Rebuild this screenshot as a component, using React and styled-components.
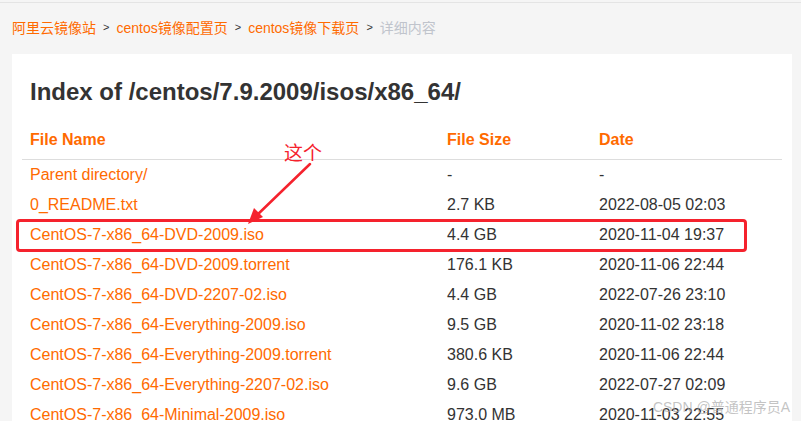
import React from "react";
import styled, { createGlobalStyle } from "styled-components";

const Global = createGlobalStyle`
  html, body { margin: 0; padding: 0; }
  body {
    background: #f5f5f5;
    font-family: "Liberation Sans", Arial, "Noto Sans CJK SC", sans-serif;
    overflow: hidden;
  }
`;

const Page = styled.div`
  position: relative;
  width: 801px;
  height: 421px;
  overflow: hidden;
  border-top: 1px solid #e4e4e4;
  margin-top: 2px;
  box-sizing: border-box;
  background: #f5f5f5;
`;

const Crumbs = styled.nav`
  display: flex;
  align-items: center;
  height: 48px;
  padding: 0 12px;
  font-size: 14px;
  font-family: "Liberation Sans", Arial, "Noto Sans CJK SC", sans-serif;
`;

const Crumb = styled.span`
  color: ${(p) => (p.$current ? "#c0c4cc" : "#ff6a00")};
`;

const Sep = styled.span`
  color: #333;
  font-size: 11px;
  margin: 0 7px 0 7px;
`;

const Card = styled.main`
  position: relative;
  margin: 3px 9px 0 12px;
  background: #fff;
  padding: 24px 10px 0;
  height: 400px;
`;

const Title = styled.h1`
  margin: 0 0 14px 8px;
  font-size: 24px;
  line-height: 28px;
  font-weight: bold;
  color: #333;
`;

const Row = styled.div`
  display: grid;
  grid-template-columns: 417px 152px 1fr;
  height: ${(p) => (p.$head ? "40px" : "30px")};
  align-items: center;
  border-bottom: ${(p) => (p.$head ? "1px solid #ddd" : "none")};
  box-sizing: border-box;
  font-size: 16px;
`;

const Cell = styled.span`
  padding-left: 8px;
  color: ${(p) => (p.$head || p.$link ? "#ff6a00" : "#333")};
  font-weight: ${(p) => (p.$head ? "bold" : "normal")};
  white-space: nowrap;
`;

const Highlight = styled.div`
  position: absolute;
  left: 4px;
  top: 165px;
  width: 731px;
  height: 33px;
  border: 3px solid #f5222d;
  border-radius: 4px;
  box-sizing: border-box;
  pointer-events: none;
`;

const Note = styled.div`
  position: absolute;
  left: 272px;
  top: 86px;
  font-size: 19px;
  color: #f5222d;
  font-family: "Noto Sans CJK SC", sans-serif;
  line-height: 24px;
`;

const Arrow = styled.svg`
  position: absolute;
  left: 225px;
  top: 105px;
`;

const Watermark = styled.div`
  position: absolute;
  right: 11px;
  bottom: 7px;
  font-size: 14px;
  color: rgba(170, 170, 170, 0.7);
  font-family: "Liberation Sans", "Noto Sans CJK SC", sans-serif;
`;

const rows = [
  ["Parent directory/", "-", "-"],
  ["0_README.txt", "2.7 KB", "2022-08-05 02:03"],
  ["CentOS-7-x86_64-DVD-2009.iso", "4.4 GB", "2020-11-04 19:37"],
  ["CentOS-7-x86_64-DVD-2009.torrent", "176.1 KB", "2020-11-06 22:44"],
  ["CentOS-7-x86_64-DVD-2207-02.iso", "4.4 GB", "2022-07-26 23:10"],
  ["CentOS-7-x86_64-Everything-2009.iso", "9.5 GB", "2020-11-02 23:18"],
  ["CentOS-7-x86_64-Everything-2009.torrent", "380.6 KB", "2020-11-06 22:44"],
  ["CentOS-7-x86_64-Everything-2207-02.iso", "9.6 GB", "2022-07-27 02:09"],
  ["CentOS-7-x86_64-Minimal-2009.iso", "973.0 MB", "2020-11-03 22:55"],
];

export default function App() {
  return (
    <Page>
      <Global />
      <Crumbs>
        <Crumb>阿里云镜像站</Crumb>
        <Sep>&gt;</Sep>
        <Crumb>centos镜像配置页</Crumb>
        <Sep>&gt;</Sep>
        <Crumb>centos镜像下载页</Crumb>
        <Sep>&gt;</Sep>
        <Crumb $current>详细内容</Crumb>
      </Crumbs>
      <Card>
        <Title>Index of /centos/7.9.2009/isos/x86_64/</Title>
        <Row $head>
          <Cell $head>File Name</Cell>
          <Cell $head>File Size</Cell>
          <Cell $head>Date</Cell>
        </Row>
        {rows.map((r) => (
          <Row key={r[0]}>
            <Cell $link>{r[0]}</Cell>
            <Cell>{r[1]}</Cell>
            <Cell>{r[2]}</Cell>
          </Row>
        ))}
        <Highlight />
        <Note>这个</Note>
        <Arrow width="90" height="75" viewBox="0 0 90 75">
          <line x1="73" y1="5" x2="18" y2="58" stroke="#f5222d" strokeWidth="2.5" strokeLinecap="round" />
          <polygon points="11,65 17,49 26,58" fill="#f5222d" />
        </Arrow>
      </Card>
      <Watermark>CSDN @普通程序员A</Watermark>
    </Page>
  );
}
